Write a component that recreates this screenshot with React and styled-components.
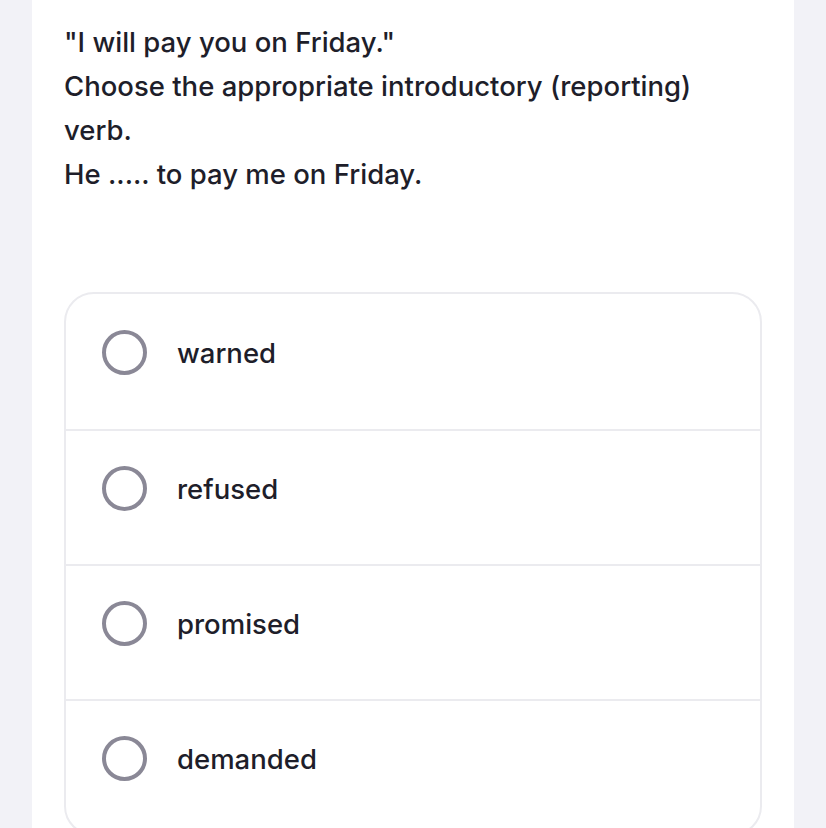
import styled, { createGlobalStyle } from "styled-components";

const GlobalStyle = createGlobalStyle`
  html, body {
    margin: 0;
    padding: 0;
    background: #f2f2f7;
    font-family: Inter, "Noto Sans", sans-serif;
  }
`;

const Page = styled.div`
  display: flex;
  justify-content: center;
  padding: 0 32px;
  min-height: 828px;
  background: #f2f2f7;
`;

const Panel = styled.div`
  flex: 1;
  background: #ffffff;
  padding: 20px 32px 0;
`;

const Question = styled.div`
  font-size: 27.5px;
  font-weight: 500;
  line-height: 44px;
  color: #1e1e2a;
`;

const Options = styled.div`
  margin-top: 96px;
  border: 2px solid #ebebef;
  border-radius: 30px;
  overflow: hidden;
`;

const Option = styled.label`
  display: flex;
  align-items: center;
  gap: 30px;
  height: 135px;
  padding: 0 36px 18px;
  box-sizing: border-box;
  cursor: pointer;
  & + & {
    border-top: 2px solid #ebebef;
  }
`;

const Radio = styled.span`
  width: 45px;
  height: 45px;
  box-sizing: border-box;
  border: 4px solid #8a8896;
  border-radius: 50%;
  flex-shrink: 0;
`;

const OptionText = styled.span`
  font-size: 27.5px;
  font-weight: 500;
  color: #1e1e2a;
`;

const answers = ["warned", "refused", "promised", "demanded"];

export default function App() {
  return (
    <>
      <GlobalStyle />
      <Page>
        <Panel>
          <Question>
            "I will pay you on Friday."
            <br />
            Choose the appropriate introductory (reporting) verb.
            <br />
            He ..... to pay me on Friday.
          </Question>
          <Options>
            {answers.map((a) => (
              <Option key={a}>
                <Radio />
                <OptionText>{a}</OptionText>
              </Option>
            ))}
          </Options>
        </Panel>
      </Page>
    </>
  );
}
